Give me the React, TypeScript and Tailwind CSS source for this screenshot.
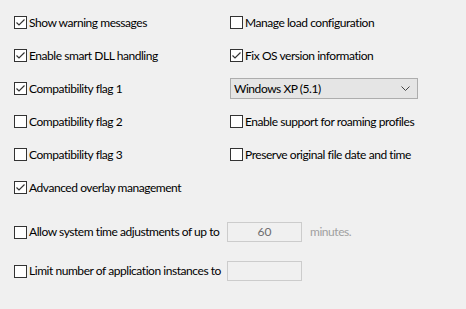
import React from 'react';

type CheckProps = { label: string; checked?: boolean };

const Check: React.FC<CheckProps> = ({ label, checked }) => (
  <label className="flex items-center gap-[2px] text-[12px] leading-[16px] tracking-[-0.45px] text-[#000]">
    <span className="flex h-[13px] w-[13px] shrink-0 items-center justify-center border border-[#333] bg-white">
      {checked && (
        <svg width="11" height="11" viewBox="0 0 11 11" fill="none">
          <path d="M1.5 5.5 L4 8 L9.5 2.5" stroke="#333" strokeWidth="1.2" />
        </svg>
      )}
    </span>
    <span className="whitespace-nowrap">{label}</span>
  </label>
);

export default function App() {
  return (
    <div
      className="h-[309px] w-[466px] overflow-hidden bg-[#f0f0f0] pl-[14px] pt-[6px]"
      style={{ fontFamily: 'Lato, "Noto Sans", sans-serif' }}
    >
      <div className="grid grid-cols-[216px_1fr] auto-rows-[33px] items-center">
        <Check label="Show warning messages" checked />
        <Check label="Manage load configuration" />
        <Check label="Enable smart DLL handling" checked />
        <Check label="Fix OS version information" checked />
        <Check label="Compatibility flag 1" checked />
        <div className="flex h-[21px] w-[188px] items-center justify-between border border-[#adadad] bg-[#e5e5e5] pl-[3px] pr-[7px] text-[12px] tracking-[-0.45px] text-black">
          <span>Windows XP (5.1)</span>
          <svg width="9" height="6" viewBox="0 0 9 6" fill="none">
            <path d="M0.5 0.5 L4.5 4.5 L8.5 0.5" stroke="#444" strokeWidth="1" />
          </svg>
        </div>
        <Check label="Compatibility flag 2" />
        <Check label="Enable support for roaming profiles" />
        <Check label="Compatibility flag 3" />
        <Check label="Preserve original file date and time" />
        <Check label="Advanced overlay management" checked />
        <div />
      </div>

      <div className="mt-[18px] flex flex-col gap-[19px]">
        <div className="flex items-center">
          <div className="w-[213px]">
            <Check label="Allow system time adjustments of up to" />
          </div>
          <div className="flex h-[20px] w-[75px] items-center justify-center border border-[#cccccc] bg-[#f0f0f0] text-[12px] text-[#6d6d6d]">
            60
          </div>
          <span className="ml-[8px] text-[12px] tracking-[-0.45px] text-[#a0a0a0]">minutes.</span>
        </div>
        <div className="flex items-center">
          <div className="w-[213px]">
            <Check label="Limit number of application instances to" />
          </div>
          <div className="h-[20px] w-[75px] border border-[#cccccc] bg-[#f0f0f0]" />
        </div>
      </div>
    </div>
  );
}
